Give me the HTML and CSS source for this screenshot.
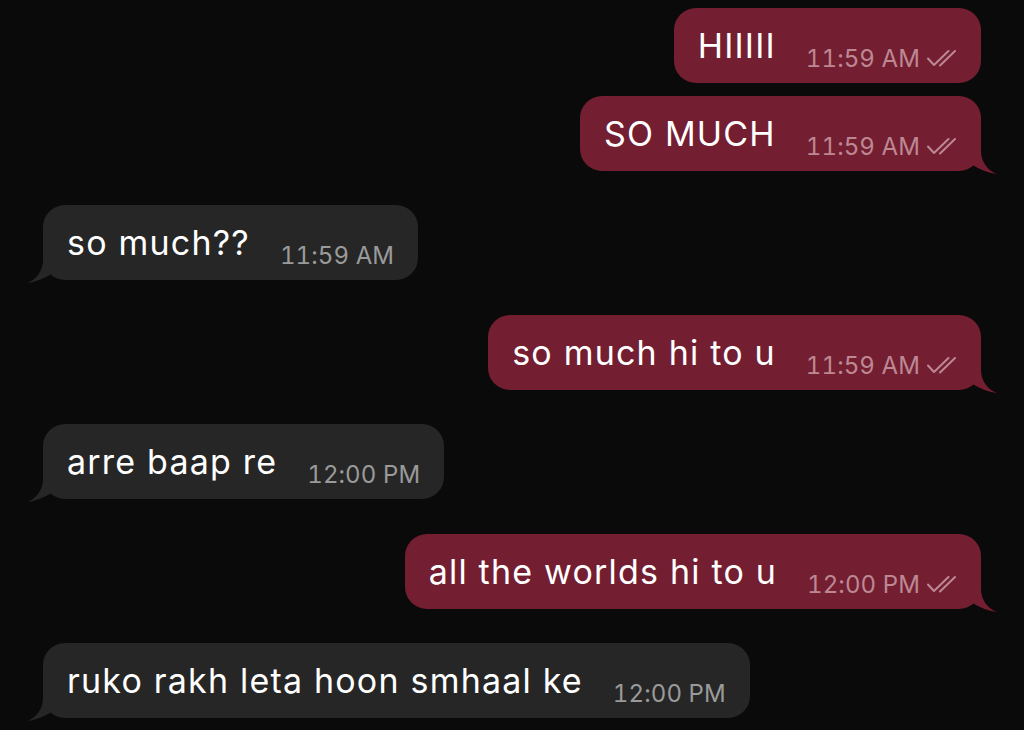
FILE: index.html
```html
<!DOCTYPE html>
<html>
<head>
<meta charset="utf-8">
<link rel="stylesheet" href="styles.css">
</head>
<body>
<div class="chat">
  <div class="row out">
    <div class="bubble out"><span class="text">HIIIII</span><span class="meta"><span class="time">11:59 AM</span><svg class="ticks" viewBox="0 0 30 17"><path d="M1 8.5 L7 15 L21.5 1 M13 15.5 L28 1"/></svg></span></div>
  </div>
  <div class="row out tight">
    <div class="bubble out"><span class="text">SO MUCH</span><span class="meta"><span class="time">11:59 AM</span><svg class="ticks" viewBox="0 0 30 17"><path d="M1 8.5 L7 15 L21.5 1 M13 15.5 L28 1"/></svg></span><svg class="tail" viewBox="0 0 30 30"><path d="M0 0 L12 0 L12 6 C12 17 19 26 28 29 Q15 27.5 2 19 L0 19 Z"/></svg></div>
  </div>
  <div class="row in">
    <div class="bubble in"><span class="text">so much??</span><span class="meta"><span class="time">11:59 AM</span></span><svg class="tail" viewBox="0 0 30 30"><path d="M0 0 L12 0 L12 6 C12 17 19 26 28 29 Q15 27.5 2 19 L0 19 Z"/></svg></div>
  </div>
  <div class="row out">
    <div class="bubble out"><span class="text">so much hi to u</span><span class="meta"><span class="time">11:59 AM</span><svg class="ticks" viewBox="0 0 30 17"><path d="M1 8.5 L7 15 L21.5 1 M13 15.5 L28 1"/></svg></span><svg class="tail" viewBox="0 0 30 30"><path d="M0 0 L12 0 L12 6 C12 17 19 26 28 29 Q15 27.5 2 19 L0 19 Z"/></svg></div>
  </div>
  <div class="row in">
    <div class="bubble in"><span class="text">arre baap re</span><span class="meta"><span class="time">12:00 PM</span></span><svg class="tail" viewBox="0 0 30 30"><path d="M0 0 L12 0 L12 6 C12 17 19 26 28 29 Q15 27.5 2 19 L0 19 Z"/></svg></div>
  </div>
  <div class="row out">
    <div class="bubble out"><span class="text">all the worlds hi to u</span><span class="meta"><span class="time">12:00 PM</span><svg class="ticks" viewBox="0 0 30 17"><path d="M1 8.5 L7 15 L21.5 1 M13 15.5 L28 1"/></svg></span><svg class="tail" viewBox="0 0 30 30"><path d="M0 0 L12 0 L12 6 C12 17 19 26 28 29 Q15 27.5 2 19 L0 19 Z"/></svg></div>
  </div>
  <div class="row in">
    <div class="bubble in"><span class="text">ruko rakh leta hoon smhaal ke</span><span class="meta"><span class="time">12:00 PM</span></span><svg class="tail" viewBox="0 0 30 30"><path d="M0 0 L12 0 L12 6 C12 17 19 26 28 29 Q15 27.5 2 19 L0 19 Z"/></svg></div>
  </div>
</div>
</body>
</html>
```

FILE: styles.css
```css
html, body {
  margin: 0;
  padding: 0;
  background: #0a0a0a;
  width: 1024px;
  height: 730px;
  overflow: hidden;
}

.chat {
  display: flex;
  flex-direction: column;
  padding: 7.5px 43px 0 43px;
  font-family: "Inter", "Liberation Sans", sans-serif;
}

.row {
  display: flex;
  margin-top: 34.5px;
}

.row:first-child {
  margin-top: 0;
}

.row.tight {
  margin-top: 13px;
}

.row.out {
  justify-content: flex-end;
}

.row.in {
  justify-content: flex-start;
}

.bubble {
  position: relative;
  height: 75px;
  box-sizing: border-box;
  padding: 0 24px 0 24px;
  border-radius: 22px;
  line-height: 75px;
  white-space: nowrap;
  color: #ffffff;
}

.bubble.out {
  background: #731e31;
}

.bubble.in {
  background: #262626;
}

.text {
  font-size: 34px;
  letter-spacing: 1.2px;
}

.meta {
  display: inline-flex;
  align-items: center;
  gap: 7px;
  margin-left: 30px;
  vertical-align: -9px;
  line-height: 24px;
}

.time {
  font-size: 24px;
  font-variant-numeric: tabular-nums;
  letter-spacing: 0.1px;
}

.out .time {
  color: #bd8893;
}

.in .time {
  color: #9a9a9a;
}

.ticks {
  width: 30px;
  height: 17px;
  fill: none;
  stroke: #bd8893;
  stroke-width: 2;
  stroke-linecap: round;
  stroke-linejoin: round;
}

.tail {
  position: absolute;
  bottom: -4px;
  width: 30px;
  height: 30px;
}

.bubble.out .tail {
  right: -18px;
  fill: #731e31;
}

.bubble.in .tail {
  left: -18px;
  transform: scaleX(-1);
  fill: #262626;
}
```
